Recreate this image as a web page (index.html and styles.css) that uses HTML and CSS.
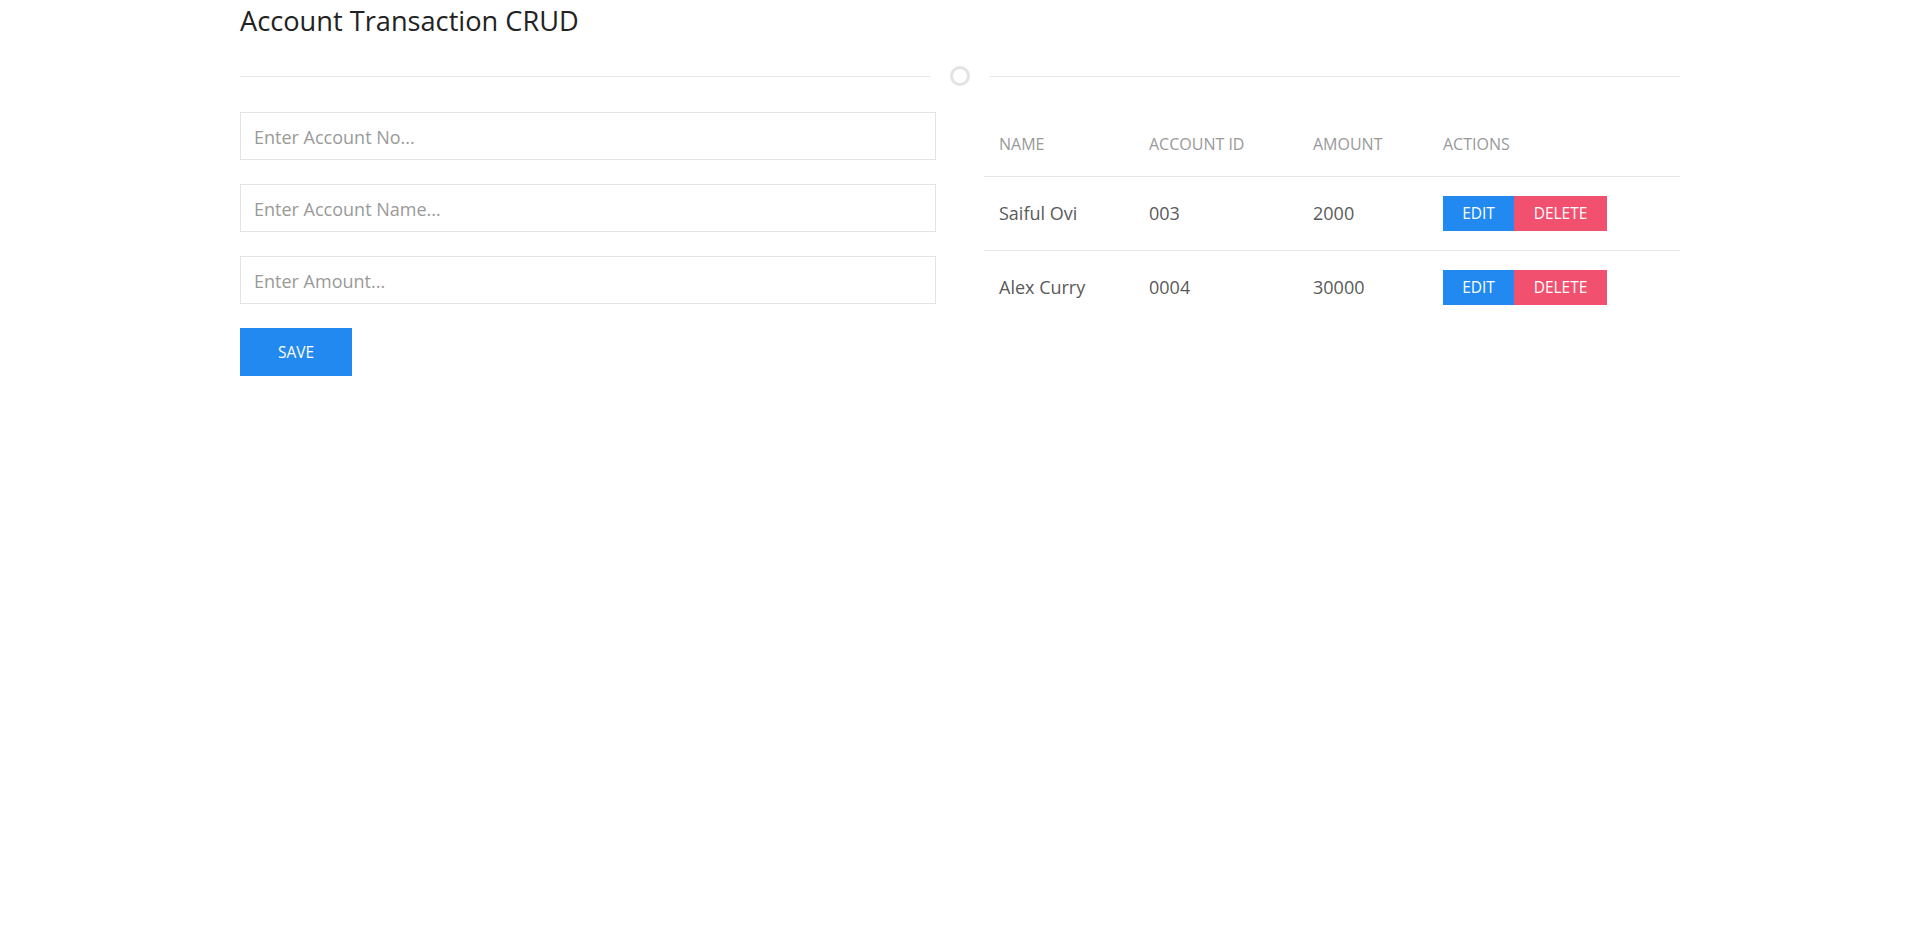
FILE: index.html
```html
<!DOCTYPE html>
<html lang="en">
<head>
<meta charset="utf-8">
<title>Account Transaction CRUD</title>
<link rel="stylesheet" href="styles.css">
</head>
<body>
<div class="page">
  <h1 class="title">Account Transaction CRUD</h1>
  <div class="divider">
    <span class="divider-line"></span>
    <span class="divider-dot"></span>
    <span class="divider-line"></span>
  </div>
  <div class="content">
    <form class="form">
      <input class="field" type="text" placeholder="Enter Account No...">
      <input class="field" type="text" placeholder="Enter Account Name...">
      <input class="field" type="text" placeholder="Enter Amount...">
      <button class="btn btn-save" type="button">SAVE</button>
    </form>
    <table class="table">
      <thead>
        <tr>
          <th class="col-name">NAME</th>
          <th class="col-id">ACCOUNT ID</th>
          <th class="col-amount">AMOUNT</th>
          <th class="col-actions">ACTIONS</th>
        </tr>
      </thead>
      <tbody>
        <tr>
          <td>Saiful Ovi</td>
          <td>003</td>
          <td>2000</td>
          <td><div class="actions"><button class="btn btn-edit" type="button">EDIT</button><button class="btn btn-delete" type="button">DELETE</button></div></td>
        </tr>
        <tr>
          <td>Alex Curry</td>
          <td>0004</td>
          <td>30000</td>
          <td><div class="actions"><button class="btn btn-edit" type="button">EDIT</button><button class="btn btn-delete" type="button">DELETE</button></div></td>
        </tr>
      </tbody>
    </table>
  </div>
</div>
</body>
</html>
```

FILE: styles.css
```css
* { box-sizing: border-box; }

html, body {
  margin: 0;
  padding: 0;
  background: #ffffff;
}

body {
  font-family: "Open Sans", "Noto Sans", sans-serif;
  color: #555;
}

.page {
  width: 1440px;
  margin: 0 auto;
}

.title {
  margin: 0;
  padding-top: 1px;
  height: 41px;
  font-size: 27.2px;
  line-height: 40px;
  font-weight: 400;
  color: #222;
}

.divider {
  margin-top: 25px;
  height: 20px;
  display: flex;
  align-items: flex-start;
}

.divider-line {
  flex: 1;
  height: 1px;
  margin-top: 10px;
  background: #e6e6e6;
}

.divider-dot {
  width: 20px;
  height: 20px;
  margin: 0 20px;
  border: 3px solid #e3e3e3;
  border-radius: 50%;
}

.content {
  margin-top: 26px;
  display: grid;
  grid-template-columns: 1fr 1fr;
  column-gap: 48px;
  align-items: start;
}

.form {
  display: flex;
  flex-direction: column;
  align-items: flex-start;
  gap: 24px;
  margin: 0;
}

.field {
  width: 100%;
  height: 48px;
  padding: 2px 13px 0;
  border: 1px solid #e3e3e3;
  font-family: inherit;
  font-size: 18px;
  color: #555;
  outline: none;
  background: #fff;
}

.field::placeholder {
  color: #9a9a9a;
}

.btn {
  border: none;
  margin: 0;
  font-family: inherit;
  font-size: 15.5px;
  color: #fff;
  cursor: pointer;
  display: inline-flex;
  align-items: center;
  justify-content: center;
}

.btn-save {
  width: 112px;
  height: 48px;
  background: #2189f0;
}

.table {
  width: 100%;
  border-collapse: collapse;
}

.table th {
  height: 64px;
  padding: 0 15px;
  text-align: left;
  font-weight: 400;
  font-size: 16px;
  color: #999;
  border-bottom: 1px solid #e6e6e6;
}

.table td {
  height: 74px;
  padding: 0 15px;
  font-size: 18px;
  color: #5a5a5a;
  border-bottom: 1px solid #e6e6e6;
}

.table tbody tr:last-child td {
  border-bottom: none;
}

.col-name { width: 150px; }
.col-id { width: 164px; }
.col-amount { width: 130px; }

.actions {
  display: flex;
}

.btn-edit {
  height: 35px;
  width: 71px;
  background: #2189f0;
}

.btn-delete {
  height: 35px;
  width: 93px;
  background: #f2506f;
}
```
